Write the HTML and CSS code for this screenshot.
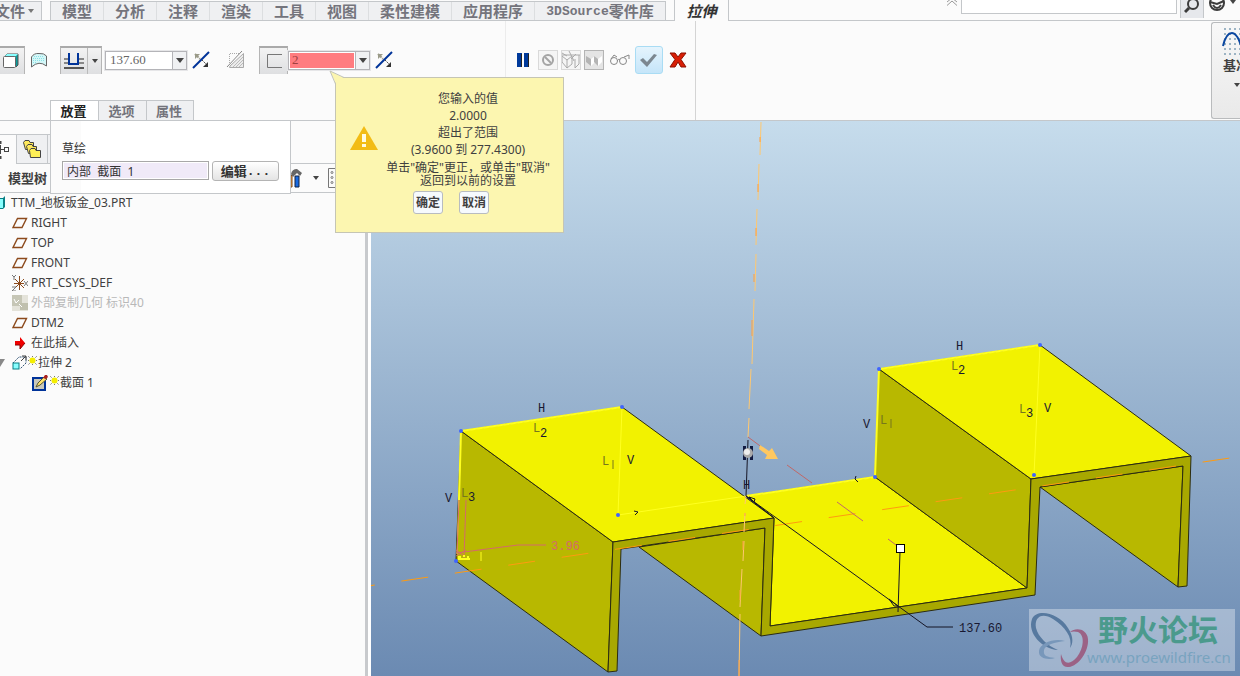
FILE: index.html
```html
<!DOCTYPE html>
<html lang="zh-CN">
<head>
<meta charset="utf-8">
<title>拉伸</title>
<link rel="stylesheet" href="styles.css">
</head>
<body>
<div class="app">
  <header class="tabbar">
    <button class="file-tab">文件<span class="caret small"></span></button>
    <nav class="ribbon-tabs">
      <button>模型</button><button>分析</button><button>注释</button><button>渲染</button><button>工具</button><button>视图</button><button class="wide">柔性建模</button><button class="wide">应用程序</button><button class="source"><span class="mono">3DSource</span>零件库</button>
    </nav>
    <button class="active-tab">拉伸</button>
    <div class="search">
      <svg width="12" height="6" viewBox="0 0 12 6" fill="none" stroke="#999"><path d="M1 2L6-2L11 2M1 5.500L6 1L11 5.500"/></svg>
      <input type="search" class="search-box" aria-label="搜索">
      <button class="search-btn" aria-label="搜索"><svg width="16" height="14" viewBox="0 0 16 14" fill="none" stroke="#3c3c3c" stroke-width="2"><circle cx="9" cy="4" r="5"/><path d="M5 8L1 12" stroke-width="3"/></svg></button>
      <button class="help-btn" aria-label="帮助"><svg width="18" height="14" viewBox="0 0 18 14" fill="none" stroke="#3c3c3c" stroke-width="2"><circle cx="9" cy="3" r="7"/><path d="M2 2L9 4L16 1M5 5Q9 11 13 5" stroke-width="2"/></svg></button>
      <span class="caret"></span>
    </div>
  </header>

  <section class="dashboard">
    <div class="feature">
      <div class="tools">
        <button class="tool pressed solid" aria-label="实体"><svg width="18" height="16" viewBox="0 0 18 16"><path d="M3 3L5 1H16V12L14 14Z" fill="#0a9a9a" stroke="#555"/><path d="M3 3L5 1H16L14 3Z" fill="#8ff"/><rect x="1.500" y="3.500" width="12" height="11" rx="1" fill="#fff" stroke="#666"/></svg></button>
        <button class="tool surface" aria-label="曲面"><svg width="18" height="18" viewBox="0 0 18 18"><path d="M1.500 6Q4 2 9 2.500Q14 2 16.500 5V15Q9 9 1.500 16Z" fill="#d4f7f8" stroke="#666"/><path d="M4 5.500H14M3 7.500H15M3 9.500H14M3 11.500H7" stroke="#8be3e7" stroke-dasharray="1 1"/></svg></button>
        <div class="split">
          <button aria-label="盲孔"><svg width="22" height="18" viewBox="0 0 22 18" fill="none"><path d="M1 7H6M16 7H21M1 11H6M16 11H21" stroke="#888" stroke-width="2"/><path d="M6 1V12H15V1" stroke="#003399" stroke-width="2"/><path d="M1 16H21" stroke="#555" stroke-width="2"/></svg></button>
          <button class="arrow" aria-label="深度选项"><span class="caret"></span></button>
        </div>
        <div class="combo"><input type="text" value="137.60" aria-label="深度"><button aria-label="深度列表"><span class="caret big"></span></button></div>
        <button class="flip" aria-label="反向"><svg width="18" height="18" viewBox="0 0 18 18"><path d="M1 17L17 1" stroke="#003399" stroke-width="2"/><path d="M3 3L8 8" stroke="#9a9a88" stroke-width="2" stroke-dasharray="2 1"/><path d="M3 3H8L3 8Z" fill="#9a9a88"/><path d="M10 9L15 14" stroke="#444" stroke-dasharray="2 1"/><path d="M16 11V16H11Z" fill="#333"/></svg></button>
        <button class="cut" aria-label="移除材料"><svg width="20" height="20" viewBox="0 0 20 20" fill="none" stroke="#aaa"><path d="M3.500 17.500H17.500V3.500L4 16Z" fill="#ececec"/><path d="M3.500 13V3.500H14" stroke-dasharray="1 1"/><path d="M1 17L16 1" stroke="#888"/><path d="M7 17L17 7M10 17L17 10M13 17L17 13" stroke="#bbb"/></svg></button>
        <button class="tool pressed thin" aria-label="加厚草绘"><svg width="18" height="16" viewBox="0 0 18 16" fill="none" stroke="#777"><path d="M17 1.500H2.500V14.500H17"/></svg></button>
        <div class="combo error"><input type="text" value="2" aria-label="厚度"><button aria-label="厚度列表"><span class="caret big"></span></button></div>
        <button class="flip last" aria-label="切换方向"><svg width="18" height="18" viewBox="0 0 18 18"><path d="M1 17L17 1" stroke="#003399" stroke-width="2"/><path d="M3 3L8 8" stroke="#9a9a88" stroke-width="2" stroke-dasharray="2 1"/><path d="M3 3H8L3 8Z" fill="#9a9a88"/><path d="M10 9L15 14" stroke="#444" stroke-dasharray="2 1"/><path d="M16 11V16H11Z" fill="#333"/></svg></button>
      </div>
      <nav class="sub-tabs"><button class="on">放置</button><button>选项</button><button>属性</button></nav>
    </div>

    <div class="controls">
      <button class="mini" aria-label="暂停"><svg width="14" height="16" viewBox="0 0 14 16"><path d="M1 1H6V15H1ZM8 1H13V15H8Z" fill="#003a9b"/><path d="M5.500 2V15M12.500 2V15" stroke="#222"/></svg></button>
      <button class="mini boxed" aria-label="无预览"><svg width="14" height="14" viewBox="0 0 14 14" fill="none" stroke="#a4a4a4" stroke-width="2"><circle cx="7" cy="7" r="5"/><path d="M4 4L10 10"/></svg></button>
      <button class="mini boxed" aria-label="分离预览"><svg width="20" height="18" viewBox="0 0 20 18" fill="none" stroke="#aaa"><path d="M1 4H19M1 5L6 9V17L1 11ZM6 9L11 5V13L6 17M10 8L15 3M14 8V17L18 13V4M1 2L6 5M8 0L13 10"/></svg></button>
      <button class="mini boxed pressed-mini" aria-label="连接预览"><svg width="20" height="18" viewBox="0 0 20 18"><path d="M2 5L7 8V15L2 11Z" fill="#b4b4b4"/><path d="M7 8L11 5V11L7 15Z" fill="#fff"/><path d="M10 5L14 8V15L10 11Z" fill="#b4b4b4"/><path d="M14 8L18 5V11L14 15Z" fill="#fff"/></svg></button>
      <button class="mini glasses" aria-label="校验"><svg width="22" height="12" viewBox="0 0 22 12" fill="none" stroke="#888" stroke-width="1"><circle cx="5" cy="7" r="3.500"/><circle cx="14" cy="7" r="3.500"/><path d="M2 5L5 1L8 3M8 7Q10 4 11 6M15 3L20 1V5"/></svg></button>
      <button class="ok" aria-label="确定"><svg width="20" height="18" viewBox="0 0 20 18"><path d="M1 9L4 7L8 11L15 3L18 4L8 16Z" fill="#7c8790"/></svg></button>
      <button class="mini" aria-label="取消"><svg width="18" height="16" viewBox="0 0 18 16"><path d="M1 1H6L9 5L12 1H17L12 7.500L17 15H12L9 10L6 15H1L6 7.500Z" fill="#d81e05" stroke="#8c1000" stroke-width="1"/></svg></button>
    </div>
    <aside class="datum">
      <svg width="30" height="28" viewBox="0 0 30 28" fill="none"><path d="M2 1H30M2 6H30M2 11H30M2 16H30M2 21H30M2 26H30" stroke="#9db4c4" stroke-width="2" stroke-dasharray="2 3"/><path d="M1 18Q4 5 10 5Q16 5 21 24" stroke="#0b47a0" stroke-width="2"/></svg>
      <span>基准</span>
      <i class="caret"></i>
    </aside>

    <div class="slide-panel">
      <label for="sketch">草绘</label>
      <div class="field-row">
        <input id="sketch" type="text" value="内部  截面  1">
        <button>编辑<span class="mono">...</span></button>
      </div>
    </div>

    <div class="callout" role="alertdialog" aria-label="您输入的值超出了范围">
      <svg class="tail" width="24" height="14" viewBox="0 0 24 14"><path d="M7 14L1 1L15 8H24V14Z" fill="#fcf6b0"/><path d="M6.500 14L1 1L15 7.500" fill="none" stroke="#c2c4b8"/></svg>
      <svg class="warn" width="28" height="26" viewBox="0 0 28 26"><path d="M14 1L28 25H0Z" fill="#f2bc15"/><path d="M12 9H16V17H12ZM12 19H16V22H12Z" fill="#fffbe0"/></svg>
      <div class="message">
        <p>您输入的值</p><p>2.0000</p><p>超出了范围</p><p>(3.9600 到 277.4300)</p>
        <p class="hint">单击"确定"更正，或单击"取消"<br>返回到以前的设置</p>
        <div class="answers"><button>确定</button><button>取消</button></div>
      </div>
    </div>
  </section>

  <main class="work">
    <aside class="navigator">
      <div class="nav-tabs">
        <button class="current" aria-label="模型树"><svg width="10" height="20" viewBox="0 0 10 20" fill="none" stroke="#444"><path d="M0 9.500H5M0.500 5V14"/><rect x="4.500" y="7.500" width="4" height="4"/><path d="M0 1V4M0 16V19" stroke-width="3"/></svg></button>
        <button aria-label="文件夹"><svg width="20" height="20" viewBox="0 0 20 20" stroke="#444"><path d="M1.500 3.500L3 1.500H7L8 3.500H11.500V10.500H3.500Z" fill="#ffe95c"/><path d="M4.500 7.500L6 5.500H10L11 7.500H14.500V14.500H6.500Z" fill="#ffe95c"/><path d="M7.500 11.500L9 9.500H13L14 11.500H18.500V18.500H8.500Z" fill="#fff056"/></svg></button>
        <span></span>
      </div>
      <div class="nav-title">
        <strong>模型树</strong>
        <div class="nav-tools">
          <svg width="18" height="20" viewBox="0 0 18 20"><path d="M3 9L6 7V19H3Z" fill="#f0a030" stroke="#742"/><path d="M9 8H13V19H9Z" fill="#1769e0" stroke="#124"/><path d="M5 6Q6 1 11 1L16 5L14 8L11 5L7 9Z" fill="#666"/></svg>
          <span class="caret"></span>
          <svg width="8" height="20" viewBox="0 0 8 20" fill="none" stroke="#777"><path d="M8 .500H.500V19.500H8"/><circle cx="4" cy="4.500" r="1"/><circle cx="4" cy="9.500" r="1"/><circle cx="4" cy="14.500" r="1"/></svg>
        </div>
      </div>
      <ul class="tree">
        <li class="root"><svg width="6" height="14" viewBox="0 0 6 14"><path d="M0 2H3L5 0V11L3 13H0Z" fill="#087f84"/><path d="M0 3H3V12H0Z" fill="#8ff"/></svg>TTM_地板钣金_03.PRT</li>
        <li><svg width="16" height="12" viewBox="0 0 16 12"><path d="M5.500 1.500H14.500L10 10.500H1Z" fill="none" stroke="#8c4a1c" stroke-width="1.400"/></svg>RIGHT</li>
        <li><svg width="16" height="12" viewBox="0 0 16 12"><path d="M5.500 1.500H14.500L10 10.500H1Z" fill="none" stroke="#8c4a1c" stroke-width="1.400"/></svg>TOP</li>
        <li><svg width="16" height="12" viewBox="0 0 16 12"><path d="M5.500 1.500H14.500L10 10.500H1Z" fill="none" stroke="#8c4a1c" stroke-width="1.400"/></svg>FRONT</li>
        <li><svg width="16" height="16" viewBox="0 0 16 16" fill="none"><path d="M7.500 1V15M3 4L12 13M12 4L3 13M2 8.500H12" stroke="#8c4a1c"/><path d="M0 0L2 2L4 0M2 2V5M0 12H4L0 16H4M12 6L16 11M16 6L12 11" stroke="#777"/></svg>PRT_CSYS_DEF</li>
        <li class="muted"><svg width="16" height="16" viewBox="0 0 16 16"><path d="M0 0H16V16H0Z" fill="#e4e3da"/><path d="M0 0H10V11H0Z" fill="#c6c6b6"/><path d="M8 8H16V15H8Z" fill="#c0c0ae"/><path d="M2 4L4 8L7 5M7 9L10 12" stroke="#fff" fill="none"/></svg>外部复制几何 标识40</li>
        <li><svg width="16" height="12" viewBox="0 0 16 12"><path d="M5.500 1.500H14.500L10 10.500H1Z" fill="none" stroke="#8c4a1c" stroke-width="1.400"/></svg>DTM2</li>
        <li><svg width="16" height="12" viewBox="0 0 16 12"><path d="M3 4H8V0L13 6L8 12V8H3Z" fill="#f00000"/><path d="M3 8H8V12L13 6" fill="none" stroke="#800"/></svg>在此插入</li>
        <li class="extrude"><svg width="6" height="8" viewBox="0 0 6 8"><path d="M0 0H5L0 8Z" fill="#888"/></svg><svg width="15" height="16" viewBox="0 0 15 16"><path d="M1 8L7 2H14V8L8 14" fill="none" stroke="#357" stroke-dasharray="2 1"/><path d="M9 6L14 1M10 1H14V5" fill="none" stroke="#444"/><rect x="1" y="8" width="6" height="6" fill="#8ff" stroke="#087f84"/></svg><svg class="star" width="9" height="9" viewBox="0 0 9 9"><path d="M0 0L9 9M9 0L0 9M4.500 0V9M0 4.500H9" stroke="#777" stroke-dasharray="1 1"/><circle cx="4.500" cy="4.500" r="3" fill="#f5ee00"/></svg>拉伸 2</li>
        <li class="section"><svg width="18" height="18" viewBox="0 0 18 18"><rect x="2" y="4" width="12" height="12" fill="#c9c9bb" stroke="#003399" stroke-width="2"/><path d="M5 13L7 9L13 3L16 5L9 11Z" fill="#ffe36c" stroke="#553"/><path d="M12 4L14 1H16L17 3L15 5Z" fill="#a22"/></svg><svg class="star" width="9" height="9" viewBox="0 0 9 9"><path d="M0 0L9 9M9 0L0 9M4.500 0V9M0 4.500H9" stroke="#777" stroke-dasharray="1 1"/><circle cx="4.500" cy="4.500" r="3" fill="#f5ee00"/></svg>截面 1</li>
      </ul>
    </aside>
    <div class="sash"></div>
    <div class="viewport">
      <svg class="scene" viewBox="371 121 869 555" preserveAspectRatio="xMinYMin slice">
        <g stroke="#2b2b10" stroke-width="1" stroke-linejoin="round">
          <path d="M639 547L765 528L761 636Z" fill="#b8b800"/>
          <path d="M1040 487L1183 466L1178 587Z" fill="#b8b800"/>
          <path d="M746 496L875 477L1027 588L770 626L774 518Z" fill="#f2f200"/>
          <path d="M879 369L1031 479L1027 588L875 477Z" fill="#b8b800"/>
          <path d="M461 431L613 542L608 672L456 561Z" fill="#b8b800"/>
          <path d="M461 431L622 407L774 518L613 542Z" fill="#f2f200"/>
          <path d="M879 369L1040 345L1191 456L1031 479Z" fill="#f2f200"/>
          <path d="M613 542L774 518L770 626L1027 588L1031 479L1191 456L1187 586L1178 587L1183 466L1040 487L1035 595L761 636L765 528L621 549L617 671L608 672Z" fill="#a8a800"/>
        </g>
        <g fill="none" stroke="#ffff20" stroke-width="1">
          <path d="M457 554L461 431L622 407L618 515L875 477L879 369L1040 345L1034 475"/>
          <path d="M461 431L622 407M461 431L459 500M746 496L875 477L879 369L1040 345" stroke-width="2"/>
        </g>
        <path d="M348 589L1230 458" class="axis" stroke-dasharray="27 27"/>
        <path d="M761 122L760 155M759 164L758 200M757 209L756 245M756 254L755 291M754 299L752 364M751 369L749 409M749 418L748 437M746 496L745 504M745 513L744 532M744 541L743 561M742 569L740 607M740 614L739 676" class="axis-v"/>
        <path d="M760 137V142M758 184V192M756 228V236M754 274V282M752 320V336M745 513V516M743 541V550M740 590V600M739 660V676" fill="none" stroke="#ffa040"/>
        <path d="M748 437L775 457M787 465L812 483M837 502L863 521M888 539L900 548" fill="none" stroke="#c06868"/>
        <path d="M760 445L769 451L772 448L778 459L765 459L767 455L759 449Z" fill="#ffc860"/>
        <g fill="none" stroke="#151525">
          <path d="M748 440L746 496L898 606L927 627H953M900 552L898 612"/>
          <path d="M746 496L774 518M749 497L755 499L754 502ZM889 599L898 606L894 606ZM634 511L638 512L635 515M856 476L855 479L858 482"/>
        </g>
        <path d="M743 446H746V460H743ZM750 446H753V460H750Z" fill="#111a40"/>
        <circle cx="748" cy="453" r="5" fill="#aaa"/><circle cx="747" cy="452" r="3" fill="#eee"/>
        <rect x="896.500" y="544.500" width="8" height="8" fill="#fff" stroke="#000"/>
        <g fill="none" stroke="#d46a6a"><path d="M459 500L457 554M466 500L464 558M456 553L518 545H546M456 550L464 556M456 556L466 550"/></g>
        <path d="M458 557H461M463 556H465M467 557H469M458 559H470" stroke="#ffff20" stroke-width="2"/>
        <path d="M481 552V561" stroke="#ffff20"/>
        <g fill="#3f64ff"><circle cx="461" cy="431" r="2"/><circle cx="622" cy="407" r="2"/><circle cx="618" cy="515" r="2"/><circle cx="456" cy="561" r="2"/><circle cx="879" cy="369" r="2"/><circle cx="1040" cy="345" r="2"/><circle cx="1034" cy="475" r="2"/><circle cx="875" cy="477" r="2"/></g>
        <g class="dim">
          <text x="538" y="412">H</text><text x="445" y="502">V</text><text x="627" y="464">V</text><text x="956" y="350">H</text><text x="863" y="428">V</text><text x="1044" y="412">V</text><text x="743" y="489">H</text>
          <text x="540" y="437">2</text><text x="468" y="501">3</text><text x="958" y="374">2</text><text x="1026" y="417">3</text>
          <text x="959" y="632">137.60</text>
        </g>
        <g class="dim faint"><text x="533" y="432">L</text><text x="461" y="497">L</text><text x="602" y="465">L</text><text x="951" y="370">L</text><text x="1019" y="413">L</text><text x="880" y="424">L</text></g>
        <path d="M613 460V469M891 419V428" stroke="#77771c"/>
        <text class="dim pink" x="551" y="550">3.96</text>
        <g class="watermark">
          <rect x="1029" y="609" width="206" height="62" fill="#fff" fill-opacity=".35"/>
          <path fill-rule="evenodd" d="M1032 619C1037 608 1059 613 1068 628C1074 637 1073 644 1070 648C1073 637 1065 627 1053 619C1042 612 1034 617 1036 628C1038 637 1048 646 1058 650C1042 649 1027 633 1032 619Z" fill="#57799f"/>
          <path d="M1070 632C1076 627 1087 629 1088 639C1089 652 1078 666 1069 667C1062 668 1060 661 1061 654C1064 665 1070 665 1077 657C1084 648 1085 635 1078 632Q1074 631 1070 632Z" fill="#9b6285"/>
          <path d="M1065 641C1054 638 1040 643 1039 651C1038 659 1049 660 1055 658C1047 657 1043 656 1044 650C1045 645 1055 642 1065 641Z" fill="#7897ba"/>
          <text x="1098" y="641" class="brand">野火论坛</text>
          <text x="1087" y="663" class="url">www.proewildfire.cn</text>
        </g>
      </svg>
    </div>
  </main>
</div>
</body>
</html>
```
FILE: styles.css
```css
* { box-sizing: border-box; }
body { margin: 0; background: #fbfbfb; color: #404040; font: 12px/16px "Noto Sans", "Noto Sans CJK SC", sans-serif; }
button { border: 0; padding: 0; margin: 0; background: none; color: inherit; font: inherit; display: flex; align-items: center; justify-content: center; flex: none; }
input { font: inherit; color: inherit; border-radius: 0; min-width: 0; }
svg { display: block; flex: none; }
p { margin: 0; }
.app { height: 100vh; display: flex; flex-direction: column; overflow: hidden; }
.caret { width: 0; height: 0; border: 3px solid transparent; border-top: 4px solid #444; border-bottom: 0; flex: none; }
.caret.big { border-width: 5px 4px 0; }
.caret.small { margin-left: 3px; border-top-color: #777; }

.tabbar { height: 21px; flex: none; display: flex; border-bottom: 1px solid #c4c7ca; font-size: 15px; font-weight: 700; color: #74747c; }
.file-tab { width: 42px; height: 19px; margin: 1px 8px 0 0; justify-content: flex-end; padding-right: 7px; background: #eff0f2; border: 1px solid #c4c7ca; border-width: 1px 1px 0 0; white-space: nowrap; }
.ribbon-tabs { display: flex; height: 19px; margin-top: 1px; border: 1px solid #c4c7ca; border-bottom: 0; background: #eff0f2; }
.ribbon-tabs button { width: 53px; border-right: 1px solid #dcdee0; }
.ribbon-tabs .wide { width: 83px; }
.ribbon-tabs .source { width: 130px; border-right: 0; }
.mono { font: 700 13px "Liberation Mono", monospace; }
.active-tab { width: 55px; height: 21px; margin-left: 8px; border: 1px solid #c4c7ca; border-width: 0 1px; background: #fbfbfb; color: #333; font-style: italic; }
.search { flex: 1; display: flex; justify-content: flex-end; align-items: flex-start; gap: 3px; padding-right: 4px; }
.search-box { width: 216px; height: 14px; border: 1px solid #c4c7ca; border-top: 0; background: #fff; }
.search-btn { width: 24px; height: 18px; align-items: flex-start; background: #e6e8ec; border: 1px solid #c4c7ca; border-width: 0 1px; }
.help-btn { width: 20px; }

.dashboard { position: relative; z-index: 2; height: 100px; flex: none; display: flex; border-bottom: 1px solid #c4c7ca; }
.feature { width: 506px; flex: none; display: flex; flex-direction: column; justify-content: space-between; border-right: 1px solid #ececec; }
.tools { display: flex; align-items: center; padding-top: 25px; }
.tool { width: 25px; height: 28px; }
.pressed, .split { border: 1px solid #b5b5b5; border-top: 2px solid #aaa; border-bottom: 0; background: linear-gradient(#f3f3f3, #dedfe1); }
.solid { border-left-width: 0; padding-right: 3px; }
.surface { margin: 0 9px 0 1px; }
.split { display: flex; width: 42px; height: 28px; margin-right: 3px; }
.split button { flex: 1; }
.split .arrow { flex: 0 0 14px; border-left: 1px solid #bbb; }
.combo { display: flex; width: 82px; height: 19px; border: 1px solid #b4b4b8; box-shadow: 0 0 0 1px #e6e6e8; background: #fff; }
.combo input { flex: 1; width: 60px; border: 0; padding: 0 4px; background: #fff; font: 13px "Liberation Serif", serif; color: #666; }
.combo button { width: 14px; border-left: 1px solid #b4b4b8; background: #f0f1f3; }
.error input { background: #ff7c80; color: #a04040; padding: 0 2px; margin: 1px; }
.flip { margin: 0 16px 0 5px; }
.cut { margin-right: 13px; }
.tool.thin { width: 29px; }
.last { margin-right: 0; }
.sub-tabs { display: flex; padding-left: 50px; font-size: 13px; font-weight: 700; color: #73737b; }
.sub-tabs button { width: 48px; height: 20px; padding-right: 2px; border: 1px solid #c4c7ca; border-bottom: 0; border-right-width: 0; background: #eff0f2; }
.sub-tabs button:last-child { border-right-width: 1px; }
.sub-tabs .on { background: #fff; color: #222; }
.controls { width: 190px; flex: none; display: flex; align-items: flex-start; padding: 25px 0 0 8px; gap: 3px; border-right: 1px solid #d4d4d4; }
.mini { width: 20px; height: 20px; margin-top: 4px; overflow: hidden; }
.controls .mini:first-child { width: 18px; margin-right: 3px; }
.controls .glasses { width: 22px; margin-left: 2px; }
.boxed { border: 1px solid #d9d9d9; background: #f5f5f5; }
.pressed-mini { border: 1px solid #b4b4b4; background: #e4e4e4; }
.ok { width: 28px; height: 28px; margin: 0 2px 0 1px; border: 1px solid #a9dcf4; border-radius: 3px; background: linear-gradient(#e5f4fd, #c5e5f9); }
.datum { width: 29px; margin: 1px 0; margin-left: auto; padding: 5px 0 0 10px; display: flex; flex-direction: column; border: 1px solid #b9bbbd; border-right: 0; border-radius: 3px 0 0 3px; background: linear-gradient(#f8f8f8, #e9e9e9); overflow: hidden; font-size: 13px; font-weight: 700; white-space: nowrap; }
.datum span { margin: 1px 0 10px 1px; }
.datum .caret { margin-left: 12px; }

.slide-panel { position: absolute; left: 50px; top: 100px; width: 241px; padding: 18px 11px 12px; border: 1px solid #c4c7ca; border-top: 0; background: linear-gradient(90deg, #fbfbfb 30px, #fff 30px); color: #333; }
.slide-panel label { display: block; line-height: 20px; }
.field-row { display: flex; gap: 3px; margin-top: 2px; }
.field-row input { width: 148px; height: 19px; padding: 0 4px; border: 1px solid #a8a8a8; background: #f0eaf8; box-shadow: inset 0 0 0 1px #fff; white-space: pre; }
.field-row button { width: 67px; height: 20px; border: 1px solid #b4b4b4; border-radius: 3px; background: linear-gradient(#fff, #e4e4e4); font-size: 13px; font-weight: 700; }
.callout { position: absolute; left: 335px; top: 56px; width: 229px; display: flex; padding: 12px 11px 18px 14px; border: 1px solid #c5c5b4; background: #fcf6b0; }
.tail { position: absolute; left: -7px; top: -8px; }
.warn { margin: 35px 6px 0 0; }
.message { flex: 1; text-align: center; line-height: 17px; white-space: nowrap; }
.hint { line-height: 13px; margin-top: 3px; }
.answers { display: flex; gap: 16px; padding-left: 29px; margin-top: 4px; }
.answers button { width: 30px; height: 23px; border: 1px solid #b8bcc0; border-radius: 3px; background: #f6fafd; font-weight: 700; }

.work { flex: 1; display: flex; min-height: 0; }
.navigator { width: 365px; flex: none; padding-top: 13px; }
.nav-tabs { display: flex; height: 30px; border-bottom: 1px solid #c4c7ca; }
.nav-tabs button { width: 31px; height: 29px; border: 1px solid #c4c7ca; border-width: 1px 1px 0 0; background: #eff0f2; }
.nav-tabs span { width: 31px; border-top: 1px solid #c4c7ca; background: #eff0f2; }
.nav-tabs .current { width: 17px; height: 30px; justify-content: flex-start; background: #fbfbfb; }
.nav-title { display: flex; align-items: center; height: 29px; padding-left: 8px; border-bottom: 1px solid #c4c7ca; font-size: 13px; }
.nav-tools { display: flex; align-items: center; gap: 9px; margin-left: auto; padding-right: 29px; }
.tree { list-style: none; margin: 0; padding: 0; }
.tree li { display: flex; align-items: center; height: 20px; padding-left: 12px; gap: 3px; white-space: nowrap; }
.tree .root { padding-left: 0; gap: 5px; }
.tree .muted { color: #b8b8b8; }
.tree .extrude { padding-left: 0; gap: 1px; }
.tree .extrude svg:first-child { margin-right: 5px; }
.tree .section { padding-left: 31px; gap: 1px; }
.star { margin-top: -6px; }
.sash { width: 6px; flex: none; border-left: 3px solid #c8cacd; background: #fff; }
.viewport { flex: 1; min-width: 0; background: linear-gradient(#c6dcec, #6b8ab2); }
.scene { width: 100%; height: 100%; }
.axis { fill: none; stroke: #ff9b10; stroke-width: 1; }
.axis-v { fill: none; stroke: #ffc870; stroke-width: 1; }
.dim { font: 12px "Liberation Mono", monospace; fill: #181830; }
.faint { fill: #77771c; }
.pink { fill: #d46a6a; }
.brand { font: 700 30px "Noto Sans CJK SC", sans-serif; fill: #4b9a8d; }
.url { font: 15px "Noto Sans", sans-serif; fill: #78a3bf; }
```
